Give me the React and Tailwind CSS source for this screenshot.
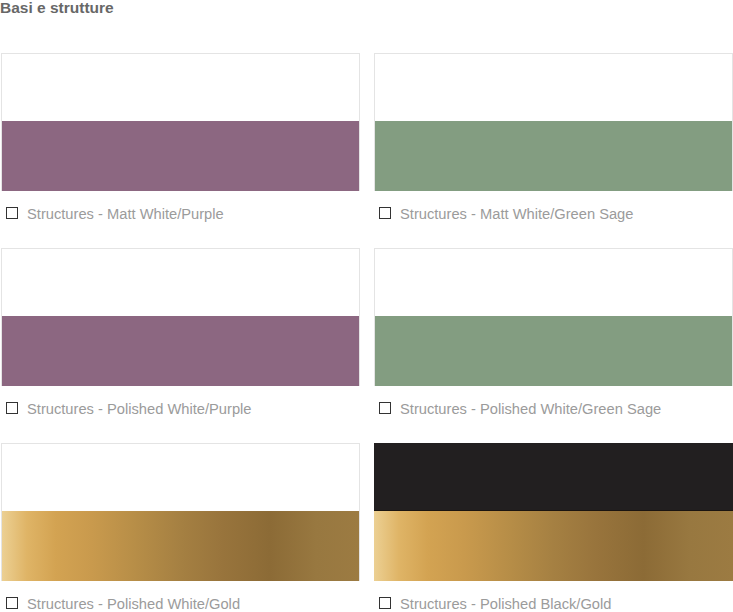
import React from "react";

const items = [
  { label: "Structures - Matt White/Purple", top: "white", band: "purple" },
  { label: "Structures - Matt White/Green Sage", top: "white", band: "green" },
  { label: "Structures - Polished White/Purple", top: "white", band: "purple" },
  { label: "Structures - Polished White/Green Sage", top: "white", band: "green" },
  { label: "Structures - Polished White/Gold", top: "white", band: "gold" },
  { label: "Structures - Polished Black/Gold", top: "black", band: "gold" },
];

const bandClass = {
  purple: "bg-[#8c6781]",
  green: "bg-[#839d81]",
  gold: "bg-[linear-gradient(to_right,#ecd093_0%,#dfb466_7%,#d3a352_15%,#c99a4d_25%,#b68d47_38%,#a58042_50%,#98743c_62%,#8c6b36_75%,#987840_88%,#9c7b42_100%)]",
};

function Swatch({ item }) {
  if (item.top === "black") {
    return (
      <div className="h-[138px] flex flex-col">
        <div className="h-[68px] bg-[#221f20] border-b border-[#1a1410]" />
        <div className={"flex-1 " + bandClass[item.band]} />
      </div>
    );
  }
  return (
    <div className="h-[138px] flex flex-col border border-b-0 border-[#e4e4e4]">
      <div className="h-[67px] bg-white" />
      <div className={"flex-1 " + bandClass[item.band]} />
    </div>
  );
}

export default function App() {
  return (
    <div className="w-[733px] h-[612px] bg-white overflow-hidden font-['Liberation_Sans',Arial,sans-serif]">
      <h2 className="text-[15.5px] leading-[16px] font-bold text-[#676767] pt-0">
        Basi e strutture
      </h2>
      <div className="grid grid-cols-[359px_359px] gap-x-[14px] pl-[1px] mt-[37px]">
        {items.map((item) => (
          <div key={item.label} className="h-[195px]">
            <Swatch item={item} />
            <div className="flex items-center mt-[16px] h-[12px] pl-[5px]">
              <span className="w-[12px] h-[12px] border-[1.5px] border-[#333] bg-white shrink-0" />
              <span className="ml-[9px] mt-[2px] text-[14.7px] leading-[14px] text-[#9b9b9b] whitespace-nowrap">
                {item.label}
              </span>
            </div>
          </div>
        ))}
      </div>
    </div>
  );
}
